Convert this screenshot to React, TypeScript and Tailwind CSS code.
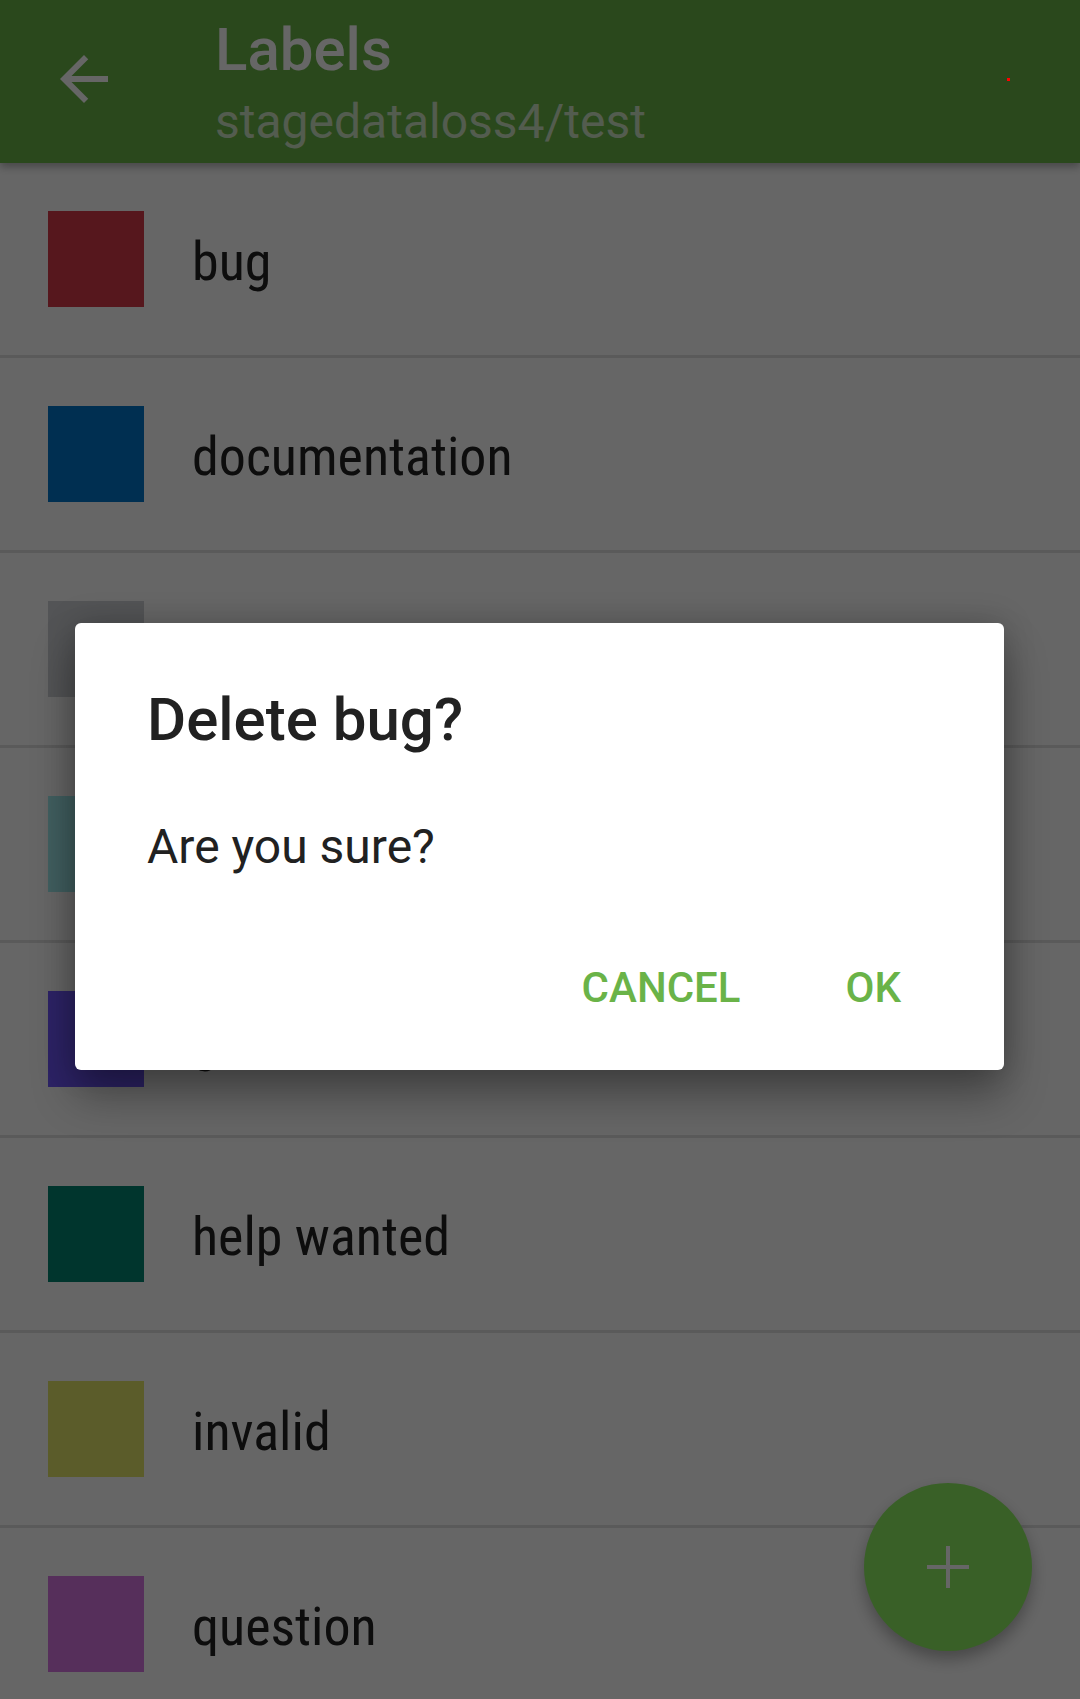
const labels = [
  { name: 'bug', color: 'bg-[#d73a4a]' },
  { name: 'documentation', color: 'bg-[#0075ca]' },
  { name: 'duplicate', color: 'bg-[#cfd3d7]' },
  { name: 'enhancement', color: 'bg-[#a2eeef]' },
  { name: 'good first issue', color: 'bg-[#7057ff]' },
  { name: 'help wanted', color: 'bg-[#008672]' },
  { name: 'invalid', color: 'bg-[#e4e669]' },
  { name: 'question', color: 'bg-[#d876e3]' },
]

function LabelRow({ name, color }: { name: string; color: string }) {
  return (
    <div className="flex h-[195px] items-center border-b-[3px] border-[#e1e1e1] bg-white">
      <div className={`ml-[48px] h-[96px] w-[96px] shrink-0 ${color}`} />
      <span className="ml-[48px] mt-[5px] text-[54px] leading-none text-[#212121] [font-stretch:condensed]">
        {name}
      </span>
    </div>
  )
}

export default function App() {
  return (
    <div className="relative h-[1699px] w-[1080px] overflow-hidden bg-white font-[Roboto,sans-serif]">
      {/* toolbar */}
      <div className="relative z-10 flex h-[163px] items-start bg-[#6ab348] shadow-[0_4px_8px_rgba(0,0,0,0.3)]">
        <div className="ml-[48px] mt-[43px] h-[72px] w-[72px]">
          <svg viewBox="0 0 24 24" className="h-full w-full fill-white">
            <path d="M20 11H7.83l5.59-5.59L12 4l-8 8 8 8 1.41-1.41L7.83 13H20v-2z" />
          </svg>
        </div>
        <div className="ml-[95px] flex flex-col pt-[20px]">
          <span className="text-[60px] font-medium leading-[60px] text-white">Labels</span>
          <span className="mt-[18px] text-[48px] leading-[48px] text-white/70">stagedataloss4/test</span>
        </div>
      </div>

      {/* label list */}
      <div className="flex flex-col">
        {labels.map((l) => (
          <LabelRow key={l.name} name={l.name} color={l.color} />
        ))}
      </div>

      {/* add button */}
      <div className="absolute left-[864px] top-[1483px] flex h-[168px] w-[168px] items-center justify-center rounded-full bg-[#8ef062] shadow-[0_8px_16px_rgba(0,0,0,0.3)]">
        <svg viewBox="0 0 42 42" className="h-[42px] w-[42px]">
          <rect x="19" y="0" width="4" height="42" fill="white" />
          <rect x="0" y="19" width="42" height="4" fill="white" />
        </svg>
      </div>

      {/* scrim */}
      <div className="absolute inset-0 z-20 bg-black/60" />

      {/* stray red pixel in the toolbar */}
      <div className="absolute left-[1007px] top-[78px] z-30 h-[3px] w-[3px] bg-[#ff0000]" />

      {/* confirm dialog */}
      <div className="absolute left-[75px] top-[623px] z-30 flex h-[447px] w-[929px] flex-col rounded-[6px] bg-white pl-[72px] pt-[67px] shadow-[0_26px_44px_rgba(0,0,0,0.32),0_0_32px_rgba(0,0,0,0.2)]">
        <h2 className="text-[60px] font-medium leading-[60px] text-[#212121]">Delete bug?</h2>
        <p className="mt-[73px] text-[48px] leading-[48px] text-[#212121]">Are you sure?</p>
        <div className="mt-[96px] flex justify-end gap-[105px] pr-[103px] text-[42px] font-medium leading-[42px] text-[#6ab348]">
          <button>CANCEL</button>
          <button>OK</button>
        </div>
      </div>
    </div>
  )
}
